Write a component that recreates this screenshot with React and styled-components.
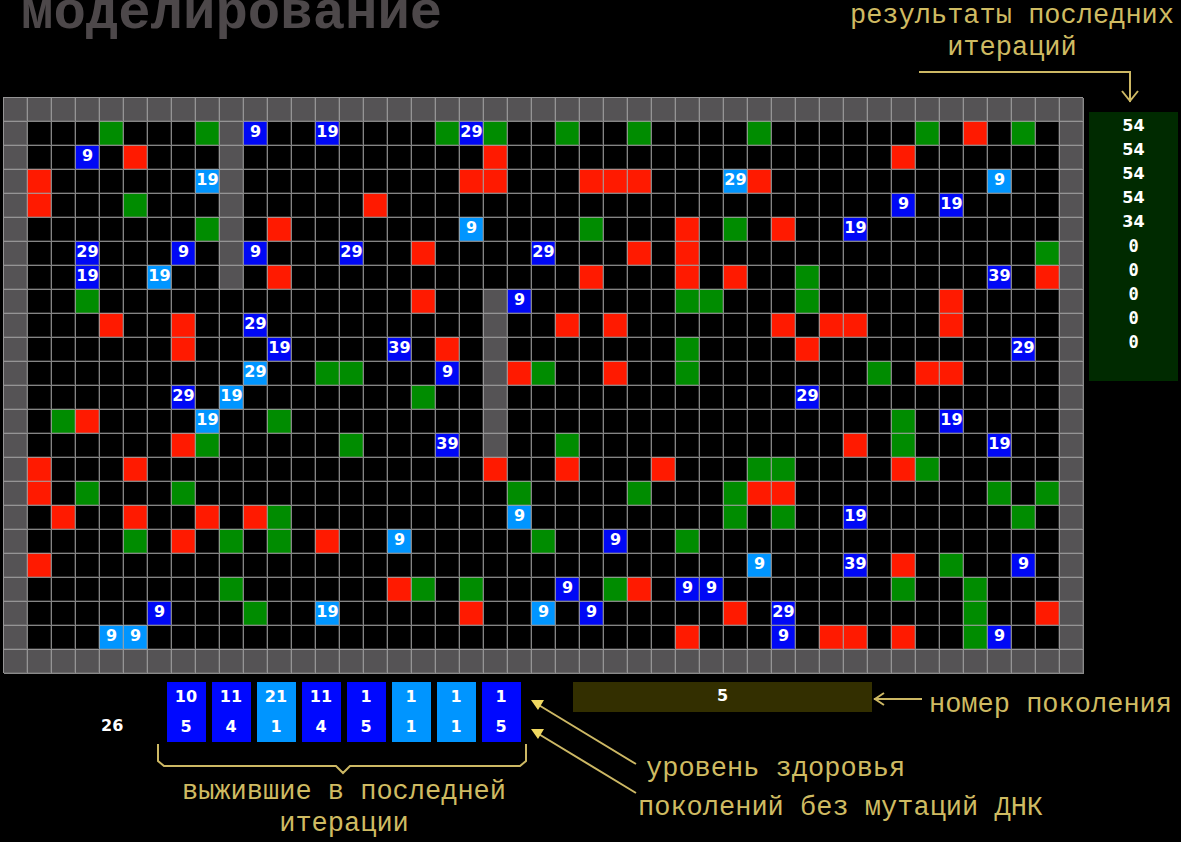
import React from "react";
import styled, { createGlobalStyle } from "styled-components";

const GlobalStyle = createGlobalStyle`
  * { box-sizing: border-box; }
  body {
    margin: 0;
    background: #000;
    color: #fff;
    font-family: "Liberation Mono", "Courier New", monospace;
  }
`;

const COLS = 45;
const ROWS = 24;

// Each entry is "<column><kind>[health]":
// w wall, g food, r poison, b bot, m freshly mutated bot.
const FIELD = [
  "",
  "4g 8g 9w 10b9 13b19 18g 19b29 20g 23g 26g 31g 38g 40r 42g",
  "3b9 5r 9w 20r 37r",
  "1r 8m19 9w 19r 20r 24r 25r 26r 30m29 31r 41m9",
  "1r 5g 9w 15r 37b9 39b19",
  "8g 9w 11r 19m9 24g 28r 30g 32r 35b19",
  "3b29 7b9 9w 10b9 14b29 17r 22b29 26r 28r 43g",
  "3b19 6m19 9w 11r 24r 28r 30r 33g 41b39 43r",
  "3g 17r 20w 21b9 28g 29g 33g 39r",
  "4r 7r 10b29 20w 23r 25r 32r 34r 35r 39r",
  "7r 11b19 16b39 18r 20w 28g 33r 42b29",
  "10m29 13g 14g 18b9 20w 21r 22g 25r 28g 36g 38r 39r",
  "7b29 9m19 17g 20w 33b29",
  "2g 3r 8m19 11g 20w 37g 39b19",
  "7r 8g 14g 18b39 20w 23g 35r 37g 41b19",
  "1r 5r 20r 23r 27r 31g 32g 37r 38g",
  "1r 3g 7g 21g 26g 30g 31r 32r 41g 43g",
  "2r 5r 8r 10r 11g 21m9 30g 32g 35b19 42g",
  "5g 7r 9g 11g 13r 16m9 22g 25b9 28g",
  "1r 31m9 35b39 37r 39g 42b9",
  "9g 16r 17g 19g 23b9 25g 26r 28b9 29b9 37g 40g",
  "6b9 10g 13m19 19r 22m9 24b9 30r 32b29 40g 43r",
  "4m9 5m9 28r 32b9 34r 35r 37r 40g 41b9",
  "",
];

const FILL = {
  w: "#555355",
  g: "#008c00",
  r: "#ff1a00",
  b: "#0008f5",
  m: "#0095ff",
  e: "#000",
};

const RESULTS = [54, 54, 54, 54, 34, 0, 0, 0, 0, 0];

const SURVIVORS = [
  { health: 10, age: 5 },
  { health: 11, age: 4 },
  { health: 21, age: 1, mutated: true },
  { health: 11, age: 4 },
  { health: 1, age: 5 },
  { health: 1, age: 1, mutated: true },
  { health: 1, age: 1, mutated: true },
  { health: 1, age: 5 },
];

function buildCells() {
  const cells = [];
  for (let row = 0; row < ROWS; row++) {
    const items = {};
    FIELD[row].split(" ").filter(Boolean).forEach((token) => {
      const [, col, kind, value] = token.match(/^(\d+)([a-z])(\d*)$/);
      items[col] = { kind, value };
    });
    for (let col = 0; col < COLS; col++) {
      const edge = row === 0 || row === ROWS - 1 || col === 0 || col === COLS - 1;
      cells.push(items[col] || { kind: edge ? "w" : "e", value: "" });
    }
  }
  return cells;
}

const CELLS = buildCells();

const Page = styled.div`
  min-width: 1100px;
`;

const Header = styled.header`
  display: flex;
  justify-content: space-between;
  height: 97px;
  padding: 0 7px 0 21px;
`;

const Title = styled.h1`
  margin: 0;
  color: #4d484a;
  font-size: 54px;
  line-height: 28px;
  font-weight: bold;
`;

const ResultsNote = styled.div`
  display: flex;
  flex-direction: column;
  align-items: center;
`;

const Note = styled.p`
  margin: 0;
  color: #cfbb62;
  font-size: 27px;
  line-height: 32px;
  text-align: center;
  white-space: nowrap;
`;

const Drawing = styled.svg`
  display: block;
  flex: none;
  overflow: visible;
  fill: none;
  stroke: #cdb864;
  stroke-width: 2;
`;

const DownArrow = styled(Drawing)`
  margin-top: 6px;
  margin-left: 33px;
`;

const Main = styled.main`
  display: flex;
  align-items: flex-start;
  gap: 6px;
  padding: 0 3px;
`;

const Board = styled.div`
  flex: 1;
  min-width: 0;
  display: grid;
  grid-template-columns: repeat(${COLS}, minmax(0, 1fr));
  box-shadow: 1px 1px 0 #8a8a8a;
`;

const Cell = styled.div`
  display: flex;
  align-items: center;
  justify-content: center;
  aspect-ratio: 1;
  min-width: 0;
  padding-bottom: 3px;
  border-top: 1px solid rgba(165, 165, 165, 0.8);
  border-left: 1px solid rgba(165, 165, 165, 0.8);
  box-shadow: inset -1px -1px 0 rgba(150, 150, 150, 0.3);
  background: ${(p) => FILL[p.$kind]};
  font: bold 16px/16px "DejaVu Sans", sans-serif;
`;

const digits = `font: bold 16px/24px "DejaVu Sans", sans-serif;`;
const slashedDigits = `font: bold 17px/24px "DejaVu Sans Mono", monospace;`;

const Results = styled.ol`
  flex: none;
  width: 89px;
  margin: 15px 0 0;
  padding: 2px 0 27px;
  list-style: none;
  text-align: center;
  background: #002a00;
`;

const Result = styled.li`
  ${(p) => (p.$zero ? slashedDigits : digits)}
`;

const Footer = styled.footer`
  display: flex;
  align-items: flex-start;
  padding: 9px 9px 0 101px;
`;

const Count = styled.output`
  width: 56px;
  padding-top: 32px;
  ${digits}
`;

const Survivors = styled.section`
  display: flex;
  flex-direction: column;
  align-items: center;
  width: 370px;
`;

const Cards = styled.ul`
  display: flex;
  gap: 6px;
  margin: 0 0 2px;
  padding: 0 0 0 3px;
  list-style: none;
`;

const Card = styled.li`
  display: flex;
  flex-direction: column;
  width: 39px;
  text-align: center;
  background: ${(p) => (p.$mutated ? FILL.m : "#0008ff")};
  font: bold 16px/30px "DejaVu Sans", sans-serif;
`;

const SurvivorsNote = styled(Note)`
  padding: 2px 0 0 4px;
`;

const Legend = styled.section`
  flex: 1;
  display: grid;
  grid-template-columns: 46px 65px 1fr;
`;

const Generation = styled.div`
  grid-area: 1 / 2 / 2 / 4;
  display: flex;
  align-items: flex-start;
`;

const GenerationBar = styled.output`
  flex: 1;
  height: 30px;
  text-align: center;
  background: #332f00;
  font: bold 16px/28px "DejaVu Sans", sans-serif;
`;

const GenerationArrow = styled(Drawing)`
  margin: 10px 7px 0 0;
`;

const GenerationNote = styled(Note)`
  padding-top: 7px;
`;

const Pointers = styled(Drawing)`
  grid-area: 1 / 1 / 3 / 3;
  margin: 14px 0 0 4px;
`;

const PointerNotes = styled.div`
  grid-area: 2 / 3 / 3 / 4;
  padding-top: 32px;
`;

const HealthNote = styled(Note)`
  padding-left: 8px;
  margin-bottom: 7px;
  text-align: left;
`;

const MutationNote = styled(Note)`
  text-align: left;
`;

export default function App() {
  return (
    <Page>
      <GlobalStyle />
      <Header>
        <Title>моделирование</Title>
        <ResultsNote>
          <Note>
            результаты последних
            <br />
            итераций
          </Note>
          <DownArrow width="220" height="34" viewBox="0 0 220 34" aria-hidden="true">
            <path d="M1 2H212V32M204 21L212 31L220 21" />
          </DownArrow>
        </ResultsNote>
      </Header>
      <Main>
        <Board>
          {CELLS.map((cell, i) => (
            <Cell key={i} $kind={cell.kind}>
              {cell.value}
            </Cell>
          ))}
        </Board>
        <Results>
          {RESULTS.map((value, i) => (
            <Result key={i} $zero={value === 0}>
              {value}
            </Result>
          ))}
        </Results>
      </Main>
      <Footer>
        <Count>26</Count>
        <Survivors>
          <Cards>
            {SURVIVORS.map((bot, i) => (
              <Card key={i} $mutated={bot.mutated}>
                <span>{bot.health}</span>
                <span>{bot.age}</span>
              </Card>
            ))}
          </Cards>
          <Drawing width="370" height="30" viewBox="0 0 370 30" aria-hidden="true">
            <path d="M1 0V17L7 22H179L186 29L193 22H363L369 17V0" />
          </Drawing>
          <SurvivorsNote>
            выжившие в последней
            <br />
            итерации
          </SurvivorsNote>
        </Survivors>
        <Legend>
          <Generation>
            <GenerationBar>5</GenerationBar>
            <GenerationArrow width="50" height="14" viewBox="0 0 50 14" aria-hidden="true">
              <path d="M50 7H2M12 1L3 7L12 13" />
            </GenerationArrow>
            <GenerationNote>номер поколения</GenerationNote>
          </Generation>
          <Pointers width="106" height="98" viewBox="0 0 106 98" aria-hidden="true">
            <path d="M6 8L105 68M6 37L105 97" />
            <path d="M0 4L13 4L7 14ZM0 33L13 33L7 43Z" fill="#f0d860" stroke="none" />
          </Pointers>
          <PointerNotes>
            <HealthNote>уровень здоровья</HealthNote>
            <MutationNote>поколений без мутаций ДНК</MutationNote>
          </PointerNotes>
        </Legend>
      </Footer>
    </Page>
  );
}
